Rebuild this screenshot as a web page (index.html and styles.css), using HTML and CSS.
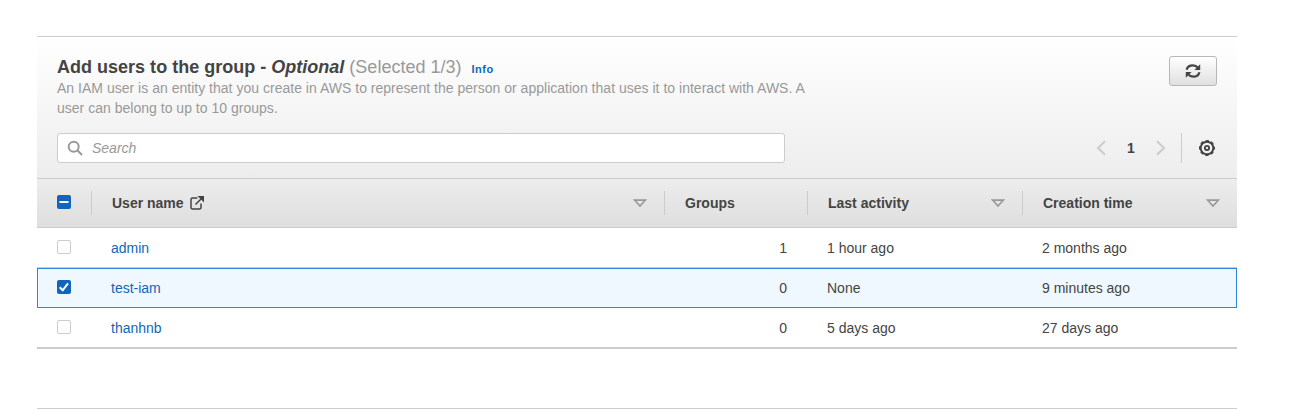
FILE: index.html
```html
<!DOCTYPE html>
<html lang="en">
<head>
<meta charset="utf-8">
<title>Add users to the group</title>
<link rel="stylesheet" href="styles.css">
</head>
<body>
<section class="panel">
  <header class="panel-header">
    <div class="title-row">
      <div class="heading">
        <h2 class="title">Add users to the group - <em>Optional</em> <span class="count">(Selected 1/3)</span><a class="info">Info</a></h2>
        <p class="description">An IAM user is an entity that you create in AWS to represent the person or application that uses it to interact with AWS. A user can belong to up to 10 groups.</p>
      </div>
      <button class="refresh" aria-label="Refresh">
        <svg width="16" height="16" viewBox="0 0 16 16" fill="none" stroke="#444" stroke-width="2.200"><path d="M1.600 6.800C2.300 3.800 4.800 2.300 7.800 2.300C10 2.300 11.700 3.100 13 4.800M14.400 9.200C13.700 12.200 11.200 13.700 8.200 13.700C6 13.700 4.300 12.900 3 11.200"/><path d="M15.200 1.300V7H9.400zM0.800 14.700V9H6.600z" fill="#444" stroke="none"/></svg>
      </button>
    </div>
    <div class="tools">
      <div class="search">
        <svg width="16" height="16" viewBox="0 0 16 16" fill="none" stroke="#999" stroke-width="2"><circle cx="6.700" cy="6.700" r="5"/><path d="M10.300 10.300L15 15"/></svg>
        <span>Search</span>
      </div>
      <div class="pager">
        <svg width="10" height="16" viewBox="0 0 10 16" fill="none" stroke="#ccc" stroke-width="2"><path d="M9 1.200L2 8L9 14.800"/></svg>
        <b class="page">1</b>
        <svg width="10" height="16" viewBox="0 0 10 16" fill="none" stroke="#ccc" stroke-width="2"><path d="M1 1.200L8 8L1 14.800"/></svg>
        <span class="settings">
          <svg width="16" height="16" viewBox="0 0 16 16" fill="none" stroke="#444"><circle cx="8" cy="8" r="6.300" stroke-width="1.900"/><circle cx="8" cy="8" r="7.400" stroke-width="1.200" stroke-dasharray="3.400 2.412" stroke-dashoffset="1.700"/><circle cx="8" cy="8" r="2.100" stroke-width="1.900"/></svg>
        </span>
      </div>
    </div>
  </header>
  <div class="row head">
    <div class="cell"><span class="check on"><svg width="14" height="14" viewBox="0 0 14 14"><path d="M2.500 7H11.500" stroke="#fff" stroke-width="2"/></svg></span></div>
    <div class="cell">User name
      <svg class="external" width="16" height="16" viewBox="0 0 16 16" fill="none" stroke="#444" stroke-width="1.500"><path d="M8.500 3H3.500Q2 3 2 4.500V12.500Q2 14 3.500 14H10.500Q12 14 12 12.500V8.500M6.500 9.500L13 3"/><path d="M8.500 1H15V7.500z" fill="#444" stroke="none"/></svg>
      <svg class="sort" width="14" height="9" viewBox="0 0 14 9"><path d="M1.700 1.200H12.300L7 7z" fill="none" stroke="#999" stroke-width="1.700"/></svg>
    </div>
    <div class="cell">Groups</div>
    <div class="cell">Last activity
      <svg class="sort" width="14" height="9" viewBox="0 0 14 9"><path d="M1.700 1.200H12.300L7 7z" fill="none" stroke="#999" stroke-width="1.700"/></svg>
    </div>
    <div class="cell">Creation time
      <svg class="sort" width="14" height="9" viewBox="0 0 14 9"><path d="M1.700 1.200H12.300L7 7z" fill="none" stroke="#999" stroke-width="1.700"/></svg>
    </div>
  </div>
  <div class="row item">
    <div class="cell"><span class="check"></span></div>
    <div class="cell"><a class="link">admin</a></div>
    <div class="cell number">1</div>
    <div class="cell">1 hour ago</div>
    <div class="cell">2 months ago</div>
  </div>
  <div class="row item selected">
    <div class="cell"><span class="check on"><svg width="14" height="14" viewBox="0 0 14 14"><path d="M2.700 7.300L5.700 10.300L11 3.300" fill="none" stroke="#fff" stroke-width="2"/></svg></span></div>
    <div class="cell"><a class="link">test-iam</a></div>
    <div class="cell number">0</div>
    <div class="cell">None</div>
    <div class="cell">9 minutes ago</div>
  </div>
  <div class="row item last">
    <div class="cell"><span class="check"></span></div>
    <div class="cell"><a class="link">thanhnb</a></div>
    <div class="cell number">0</div>
    <div class="cell">5 days ago</div>
    <div class="cell">27 days ago</div>
  </div>
</section>
<div class="next-panel"></div>
</body>
</html>
```

FILE: styles.css
```css
* { box-sizing: border-box; }
body {
  margin: 0;
  padding: 36px 59px 0 37px;
  background: #fff;
  color: #444;
  font: 14px/20px "Liberation Sans", Arial, sans-serif;
  overflow: hidden;
}
svg { display: block; flex: none; }
.panel { width: 1200px; }
.panel-header {
  height: 142px;
  padding: 19px 20px 0;
  border-top: 1px solid #ccc;
  background: linear-gradient(#fff, #ededed);
}
.title-row { display: flex; justify-content: space-between; height: 77px; }
.heading { width: 760px; }
.title { margin: 0 0 -2px; font-size: 18px; line-height: 22px; letter-spacing: 0.01px; }
.count { color: #999; font-weight: 400; }
.info { margin-left: 10px; color: #1166bb; font-size: 11px; letter-spacing: 0.5px; }
.description { margin: 0; color: #999; letter-spacing: 0.015px; }
.refresh {
  display: flex;
  align-items: center;
  justify-content: center;
  width: 48px;
  height: 30px;
  padding: 0;
  border: 1px solid #b7b7b7;
  border-radius: 3px;
  background: linear-gradient(#fff, #e0e0e0);
}
.tools { display: flex; justify-content: space-between; height: 30px; }
.search {
  display: flex;
  align-items: center;
  gap: 9px;
  width: 728px;
  padding-left: 9px;
  border: 1px solid #ccc;
  border-radius: 3px;
  background: #fff;
  color: #999;
  font-style: italic;
}
.pager { display: flex; align-items: center; }
.page { width: 50px; text-align: center; }
.settings {
  display: flex;
  align-items: center;
  height: 30px;
  margin-left: 15px;
  padding: 0 2px 0 17px;
  border-left: 1px solid #ccc;
}
.row { display: grid; grid-template-columns: 55px 573px 143px 215px 214px; }
.cell { display: flex; align-items: center; }
.head {
  height: 50px;
  padding: 12px 0;
  border: solid #ccc;
  border-width: 1px 0;
  background: linear-gradient(#ededed, #dedede);
  font-weight: 700;
}
.head .cell { padding: 0 17px 0 20px; border-right: 1px solid #ccc; }
.head .cell:first-child { padding-right: 0; }
.head .cell:last-child { border-right: 0; }
.external { margin-left: 5px; }
.sort { margin-left: auto; }
.item { height: 40px; border-bottom: 1px solid #ccc; }
.item .cell { padding: 1px 20px 0 19px; }
.item .cell:first-child { padding: 0 0 1px 20px; }
.item .number { justify-content: flex-end; padding-right: 21px; }
.selected { border: 1px solid #2e86de; background: #f0f8ff; grid-template-columns: 54px 573px 143px 215px 213px; }
.selected .cell { padding-top: 0; padding-bottom: 0; }
.selected .cell:first-child { padding: 0 0 2px 19px; }
.last { height: 41px; border-bottom-width: 2px; }
.link { color: #1166bb; }
.check {
  width: 14px;
  height: 14px;
  border: 1px solid #ccc;
  border-radius: 2px;
  background: #fff;
}
.check.on { border: 0; background: #1166bb; }
.head .check { margin-bottom: 2px; }
.next-panel { width: 1200px; height: 1px; margin-top: 59px; background: #ccc; }
```
